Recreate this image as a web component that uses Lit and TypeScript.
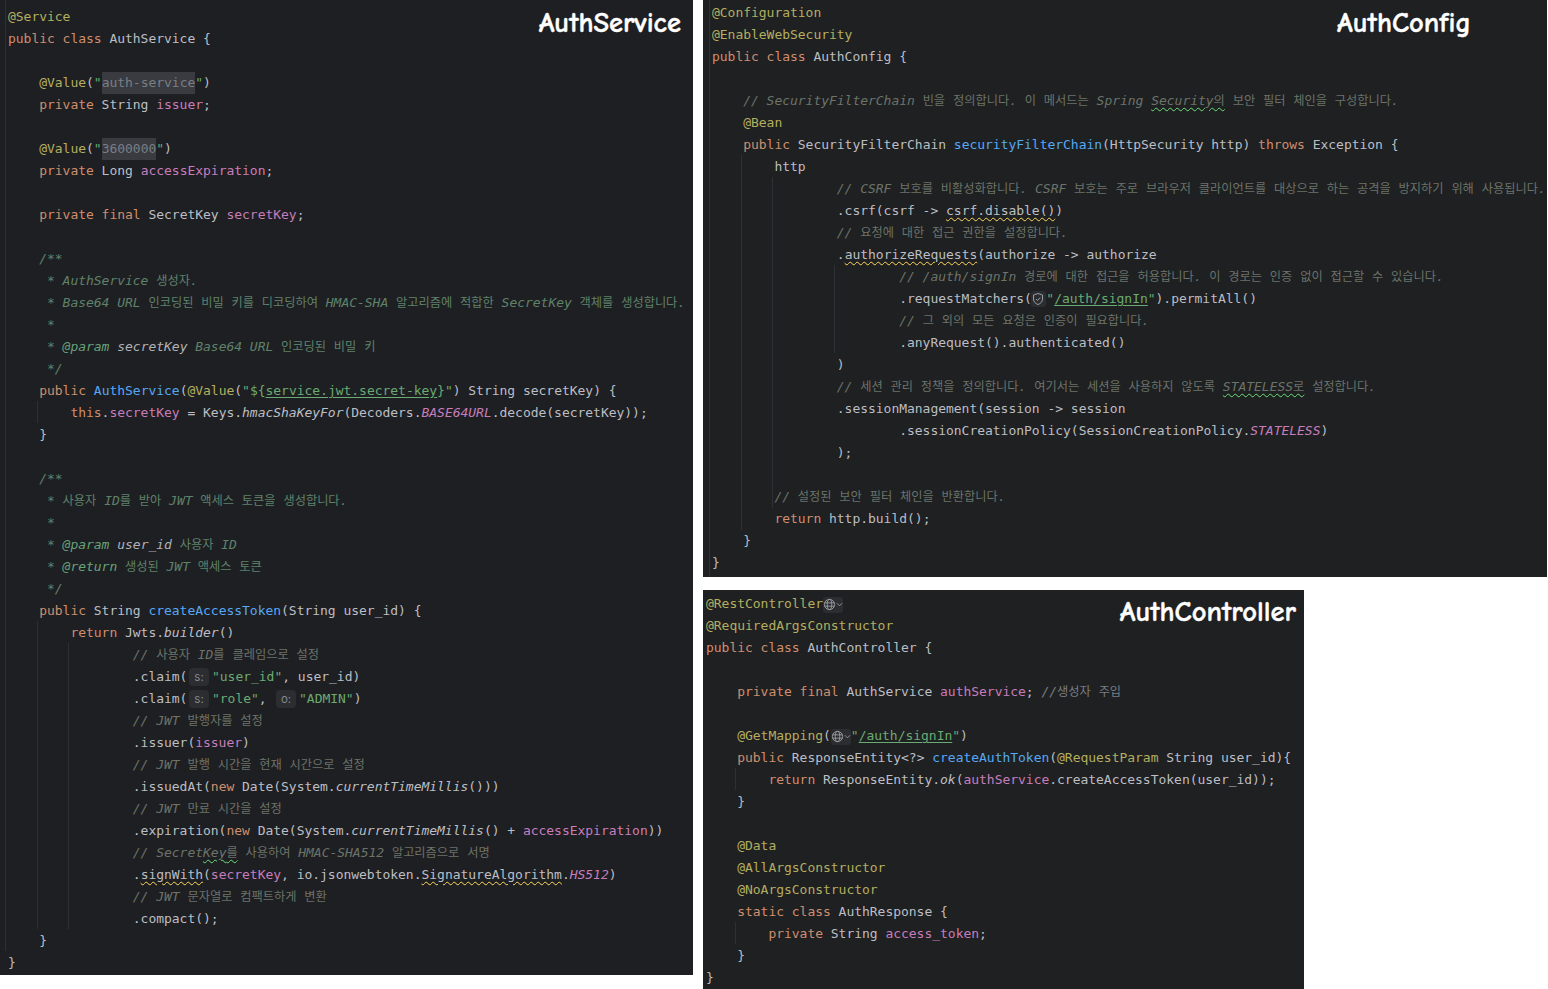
import { LitElement, html, css, svg } from "lit";
import { customElement, property } from "lit/decorators.js";

type Guide = [number, number, number];

const SERVICE = [
  "[a|@Service]",
  "[k|public class] AuthService {",
  "",
  '    [a|@Value](<q>[fold|auth-service]<q>)',
  "    [k|private] String [f|issuer];",
  "",
  '    [a|@Value](<q>[fold|3600000]<q>)',
  "    [k|private] Long [f|accessExpiration];",
  "",
  "    [k|private final] SecretKey [f|secretKey];",
  "",
  "    [d|/**]",
  "    [d| * AuthService 생성자.]",
  "    [d| * Base64 URL 인코딩된 비밀 키를 디코딩하여 HMAC-SHA 알고리즘에 적합한 SecretKey 객체를 생성합니다.]",
  "    [d| *]",
  "    [d| * ][dt|@param] [dn|secretKey] [d|Base64 URL 인코딩된 비밀 키]",
  "    [d| */]",
  '    [k|public] [m|AuthService]([a|@Value]([s|"${][s u|service.jwt.secret-key][s|}"]) String secretKey) {',
  "        [k|this].[f|secretKey] = Keys.[i|hmacShaKeyFor](Decoders.[f i|BASE64URL].decode(secretKey));",
  "    }",
  "",
  "    [d|/**]",
  "    [d| * 사용자 ID를 받아 JWT 액세스 토큰을 생성합니다.]",
  "    [d| *]",
  "    [d| * ][dt|@param] [dn|user_id] [d|사용자 ID]",
  "    [d| * ][dt|@return] [d|생성된 JWT 액세스 토큰]",
  "    [d| */]",
  "    [k|public] String [m|createAccessToken](String user_id) {",
  "        [k|return] Jwts.[i|builder]()",
  "                [c|// 사용자 ID를 클레임으로 설정]",
  '                .claim([hint|s:][s|"user_id"], user_id)',
  '                .claim([hint|s:][s|"role"], [hint|o:][s|"ADMIN"])',
  "                [c|// JWT 발행자를 설정]",
  "                .issuer([f|issuer])",
  "                [c|// JWT 발행 시간을 현재 시간으로 설정]",
  "                .issuedAt([k|new] Date(System.[i|currentTimeMillis]()))",
  "                [c|// JWT 만료 시간을 설정]",
  "                .expiration([k|new] Date(System.[i|currentTimeMillis]() + [f|accessExpiration]))",
  "                [c|// Secret][c g|Key를][c| 사용하여 HMAC-SHA512 알고리즘으로 서명]",
  "                .[w|signWith]([f|secretKey], io.jsonwebtoken.[w|SignatureAlgorithm].[f i|HS512])",
  "                [c|// JWT 문자열로 컴팩트하게 변환]",
  "                .compact();",
  "    }",
  "}",
];

const CONFIG = [
  "[a|@Configuration]",
  "[a|@EnableWebSecurity]",
  "[k|public class] AuthConfig {",
  "",
  "    [c|// SecurityFilterChain 빈을 정의합니다. 이 메서드는 Spring ][c g|Security의][c| 보안 필터 체인을 구성합니다.]",
  "    [a|@Bean]",
  "    [k|public] SecurityFilterChain [m|securityFilterChain](HttpSecurity http) [k|throws] Exception {",
  "        http",
  "                [c|// CSRF 보호를 비활성화합니다. CSRF 보호는 주로 브라우저 클라이언트를 대상으로 하는 공격을 방지하기 위해 사용됩니다.]",
  "                .csrf(csrf -> [w|csrf.disable()])",
  "                [c|// 요청에 대한 접근 권한을 설정합니다.]",
  "                .[w|authorizeRequests](authorize -> authorize",
  "                        [c|// /auth/signIn 경로에 대한 접근을 허용합니다. 이 경로는 인증 없이 접근할 수 있습니다.]",
  '                        .requestMatchers([shield|][s|"][s u|/auth/signIn][s|"]).permitAll()',
  "                        [c|// 그 외의 모든 요청은 인증이 필요합니다.]",
  "                        .anyRequest().authenticated()",
  "                )",
  "                [c|// 세션 관리 정책을 정의합니다. 여기서는 세션을 사용하지 않도록 ][c g|STATELESS로][c| 설정합니다.]",
  "                .sessionManagement(session -> session",
  "                        .sessionCreationPolicy(SessionCreationPolicy.[f i|STATELESS])",
  "                );",
  "",
  "        [c|// 설정된 보안 필터 체인을 반환합니다.]",
  "        [k|return] http.build();",
  "    }",
  "}",
];

const CONTROLLER = [
  "[a|@RestController][globe|]",
  "[a|@RequiredArgsConstructor]",
  "[k|public class] AuthController {",
  "",
  "    [k|private final] AuthService [f|authService]; [c2|//생성자 주입]",
  "",
  '    [a|@GetMapping]([globe|][s|"][s u|/auth/signIn][s|"])',
  "    [k|public] ResponseEntity<?> [m|createAuthToken]([a|@RequestParam] String user_id){",
  "        [k|return] ResponseEntity.[i|ok]([f|authService].createAccessToken(user_id));",
  "    }",
  "",
  "    [a|@Data]",
  "    [a|@AllArgsConstructor]",
  "    [a|@NoArgsConstructor]",
  "    [k|static class] AuthResponse {",
  "        [k|private] String [f|access_token];",
  "    }",
  "}",
];

const shieldIcon = svg`<svg viewBox="0 0 14 14" width="14" height="14" fill="none" stroke="#9a9da3" stroke-width="1"><path d="M7 1.5 2.5 3v4c0 2.8 2 4.6 4.5 5.5 2.5-.9 4.5-2.7 4.5-5.5V3z"/><path d="m5 7 1.5 1.5L9.2 5.6"/></svg>`;
const globeIcon = svg`<svg viewBox="0 0 14 14" width="13" height="13" fill="none" stroke="#9a9da3" stroke-width="1"><circle cx="7" cy="7" r="5.5"/><ellipse cx="7" cy="7" rx="2.4" ry="5.5"/><path d="M1.5 5.2h11M1.5 8.8h11"/></svg>`;
const chevronIcon = svg`<svg viewBox="0 0 8 8" width="7" height="7" fill="none" stroke="#9a9da3" stroke-width="1"><path d="m1 2.5 3 3 3-3"/></svg>`;

@customElement("code-panel")
class CodePanel extends LitElement {
  @property({ attribute: false }) lines: string[] = [];
  @property({ attribute: false }) guides: Guide[] = [];
  @property() heading = "";

  static styles = css`
    :host {
      display: block;
      position: relative;
      overflow: hidden;
      box-sizing: border-box;
      color: #bcbec4;
      font-family: "DejaVu Sans Mono", "Liberation Mono", monospace;
      font-size: 13px;
      letter-spacing: -0.026px;
    }
    .line {
      display: block;
      height: 22px;
      line-height: 22px;
      white-space: pre;
    }
    .ko {
      font-family: "Noto Sans CJK KR", sans-serif;
      font-size: 12.22px;
      font-style: normal;
      letter-spacing: 0;
      line-height: 0;
    }
    .k { color: #cf8e6d; }
    .a { color: #b3ae60; }
    .s { color: #6aab73; }
    .f { color: #c77dbb; }
    .m { color: #56a8f5; }
    .c { color: #6c7369; font-style: italic; }
    .c2 { color: #7a7e85; font-style: italic; }
    .d { color: #5f826b; font-style: italic; }
    .dt { color: #67a37c; font-style: italic; }
    .dn { color: #b0b2b8; font-style: italic; }
    .i { font-style: italic; }
    .u { text-decoration: underline; text-underline-offset: 2px; }
    .w, .g {
      text-decoration-line: underline;
      text-decoration-style: wavy;
      text-decoration-thickness: 1.2px;
      text-underline-offset: 2px;
    }
    .w { text-decoration-color: #ffd75e; }
    .g { text-decoration-color: #6fe07a; }
    .fold {
      display: inline-block;
      height: 22px;
      background: #393b40;
      color: #7a7e85;
    }
    .q { color: #6aab73; }
    .hint {
      display: inline-block;
      box-sizing: border-box;
      width: 20px;
      height: 18px;
      line-height: 18px;
      margin: 0 3px 0 1.6px;
      border-radius: 4px;
      background: #2b2d30;
      color: #85888e;
      font-family: "Inter", sans-serif;
      font-size: 11.5px;
      text-align: center;
      letter-spacing: 0;
    }
    .shield, .globe {
      display: inline-flex;
      align-items: center;
      height: 16px;
      vertical-align: -3px;
      background: #2b2d30;
      border-radius: 3px;
    }
    .shield { width: 15px; justify-content: center; margin: 0 0.5px 0 -1px; }
    .globe { width: 20px; }
    .guide {
      position: absolute;
      width: 1px;
      background: #2e3034;
    }
    .heading {
      position: absolute;
      top: var(--heading-top, 6px);
      right: var(--heading-right, 12px);
      color: #fff;
      font-family: "Comic Sans MS", "Comic Neue", "DejaVu Sans", cursive;
      font-size: 28.5px;
      font-weight: 700;
      letter-spacing: 0;
      line-height: 34px;
      -webkit-text-stroke: 0.4px #fff;
    }
  `;

  private text(value: string) {
    return value
      .split(/([\uac00-\ud7a3]+)/)
      .map((part, i) =>
        i % 2 ? html`<span class="ko">${part}</span>` : part,
      );
  }

  private token(classes: string, value: string) {
    if (classes === "hint") return html`<span class="hint">${value}</span>`;
    if (classes === "shield") return html`<span class="shield">${shieldIcon}</span>`;
    if (classes === "globe")
      return html`<span class="globe">${globeIcon}${chevronIcon}</span>`;
    return html`<span class=${classes}>${this.text(value)}</span>`;
  }

  private renderLine(source: string) {
    const pieces: unknown[] = [];
    const pattern = /\[([^|\]]+)\|([^\]]*)\]|<q>/g;
    let last = 0;
    let match: RegExpExecArray | null;
    while ((match = pattern.exec(source))) {
      pieces.push(this.text(source.slice(last, match.index)));
      pieces.push(
        match[0] === "<q>"
          ? html`<span class="q">"</span>`
          : this.token(match[1], match[2]),
      );
      last = match.index + match[0].length;
    }
    pieces.push(this.text(source.slice(last)));
    return html`<div class="line">${pieces}</div>`;
  }

  render() {
    return html`
      ${this.guides.map(
        ([x, top, bottom]) =>
          html`<div
            class="guide"
            style="left:${x}px;top:${top}px;height:${bottom - top}px"
          ></div>`,
      )}
      ${this.lines.map((l) => this.renderLine(l))}
      <div class="heading">${this.heading}</div>
    `;
  }
}

@customElement("app-root")
class AppRoot extends LitElement {
  static styles = css`
    :host {
      display: flex;
      gap: 10px;
      width: 1548px;
      height: 989px;
      overflow: hidden;
      background: #fff;
    }
    .side {
      display: flex;
      flex-direction: column;
      align-items: flex-start;
      gap: 13px;
    }
    .service {
      width: 693px;
      height: 975px;
      padding: 6px 0 0 8px;
      background: #1e1f22;
      --heading-right: 12px;
    }
    .config {
      width: 844px;
      height: 577px;
      padding: 2px 0 0 9px;
      background: #1e2022;
      --heading-right: 76px;
    }
    .controller {
      width: 601px;
      height: 399px;
      padding: 3px 0 0 3px;
      background: #1f2022;
      --heading-right: 8px;
      --heading-top: 5px;
    }
  `;

  render() {
    return html`
      <code-panel
        class="service"
        heading="AuthService"
        .lines=${SERVICE}
        .guides=${[
          [5, 0, 951],
          [37, 401, 423],
          [37, 621, 929],
          [68, 643, 929],
        ] as Guide[]}
      ></code-panel>
      <div class="side">
        <code-panel
          class="config"
          heading="AuthConfig"
          .lines=${CONFIG}
          .guides=${[
            [6, 0, 577],
            [38, 155, 530],
            [69, 177, 508],
            [131, 265, 353],
          ] as Guide[]}
        ></code-panel>
        <code-panel
          class="controller"
          heading="AuthController"
          .lines=${CONTROLLER}
          .guides=${[
            [32, 178, 200],
            [32, 332, 354],
          ] as Guide[]}
        ></code-panel>
      </div>
    `;
  }
}

declare global {
  interface HTMLElementTagNameMap {
    "app-root": AppRoot;
    "code-panel": CodePanel;
  }
}
